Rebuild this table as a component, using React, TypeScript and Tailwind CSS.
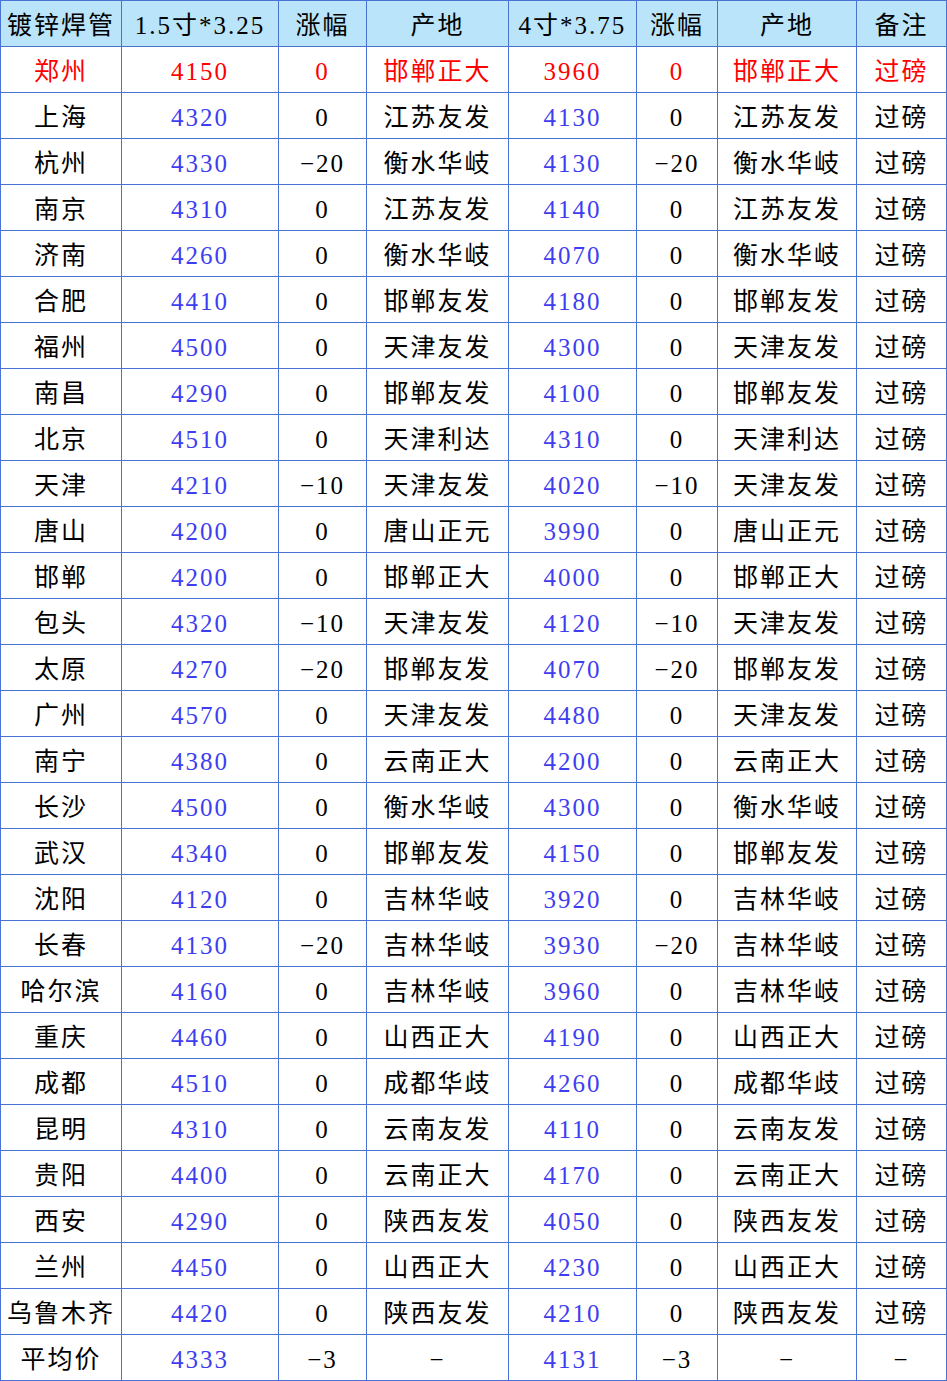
const header = ['镀锌焊管', '1.5寸*3.25', '涨幅', '产地', '4寸*3.75', '涨幅', '产地', '备注']

// city, price1, change1, origin1, price2, change2, origin2, note
const rows: string[][] = [
  ['郑州', '4150', '0', '邯郸正大', '3960', '0', '邯郸正大', '过磅'],
  ['上海', '4320', '0', '江苏友发', '4130', '0', '江苏友发', '过磅'],
  ['杭州', '4330', '−20', '衡水华岐', '4130', '−20', '衡水华岐', '过磅'],
  ['南京', '4310', '0', '江苏友发', '4140', '0', '江苏友发', '过磅'],
  ['济南', '4260', '0', '衡水华岐', '4070', '0', '衡水华岐', '过磅'],
  ['合肥', '4410', '0', '邯郸友发', '4180', '0', '邯郸友发', '过磅'],
  ['福州', '4500', '0', '天津友发', '4300', '0', '天津友发', '过磅'],
  ['南昌', '4290', '0', '邯郸友发', '4100', '0', '邯郸友发', '过磅'],
  ['北京', '4510', '0', '天津利达', '4310', '0', '天津利达', '过磅'],
  ['天津', '4210', '−10', '天津友发', '4020', '−10', '天津友发', '过磅'],
  ['唐山', '4200', '0', '唐山正元', '3990', '0', '唐山正元', '过磅'],
  ['邯郸', '4200', '0', '邯郸正大', '4000', '0', '邯郸正大', '过磅'],
  ['包头', '4320', '−10', '天津友发', '4120', '−10', '天津友发', '过磅'],
  ['太原', '4270', '−20', '邯郸友发', '4070', '−20', '邯郸友发', '过磅'],
  ['广州', '4570', '0', '天津友发', '4480', '0', '天津友发', '过磅'],
  ['南宁', '4380', '0', '云南正大', '4200', '0', '云南正大', '过磅'],
  ['长沙', '4500', '0', '衡水华岐', '4300', '0', '衡水华岐', '过磅'],
  ['武汉', '4340', '0', '邯郸友发', '4150', '0', '邯郸友发', '过磅'],
  ['沈阳', '4120', '0', '吉林华岐', '3920', '0', '吉林华岐', '过磅'],
  ['长春', '4130', '−20', '吉林华岐', '3930', '−20', '吉林华岐', '过磅'],
  ['哈尔滨', '4160', '0', '吉林华岐', '3960', '0', '吉林华岐', '过磅'],
  ['重庆', '4460', '0', '山西正大', '4190', '0', '山西正大', '过磅'],
  ['成都', '4510', '0', '成都华歧', '4260', '0', '成都华歧', '过磅'],
  ['昆明', '4310', '0', '云南友发', '4110', '0', '云南友发', '过磅'],
  ['贵阳', '4400', '0', '云南正大', '4170', '0', '云南正大', '过磅'],
  ['西安', '4290', '0', '陕西友发', '4050', '0', '陕西友发', '过磅'],
  ['兰州', '4450', '0', '山西正大', '4230', '0', '山西正大', '过磅'],
  ['乌鲁木齐', '4420', '0', '陕西友发', '4210', '0', '陕西友发', '过磅'],
  ['平均价', '4333', '−3', '−', '4131', '−3', '−', '−'],
]

// price columns are blue
const priceCols = [1, 4]

function Cell({ text, className }: { text: string; className: string }) {
  return (
    <div
      className={`flex h-[46px] items-center justify-center border-r border-b border-[#4a72d2] pt-[4px] whitespace-nowrap ${className}`}
    >
      {text}
    </div>
  )
}

export default function App() {
  return (
    <div className="w-[947px] bg-white font-['Liberation_Serif','Noto_Sans_CJK_SC',serif] text-[25px] leading-none tracking-[2px]">
      <div className="grid grid-cols-[121px_157px_88px_142px_128px_81px_139px_90px] border-t border-l border-[#4a72d2]">
        {/* Header */}
        {header.map((h, i) => (
          <Cell key={`h${i}`} text={h} className="bg-[#bae4fa] text-black" />
        ))}

        {/* Rows */}
        {rows.map((row, r) =>
          row.map((text, c) => {
            let color = 'text-black'
            if (r === 0) color = 'text-[#ff0000]'
            else if (priceCols.includes(c)) color = 'text-[#3e3ef0]'
            return <Cell key={`${r}-${c}`} text={text} className={`bg-white ${color}`} />
          }),
        )}
      </div>
    </div>
  )
}
